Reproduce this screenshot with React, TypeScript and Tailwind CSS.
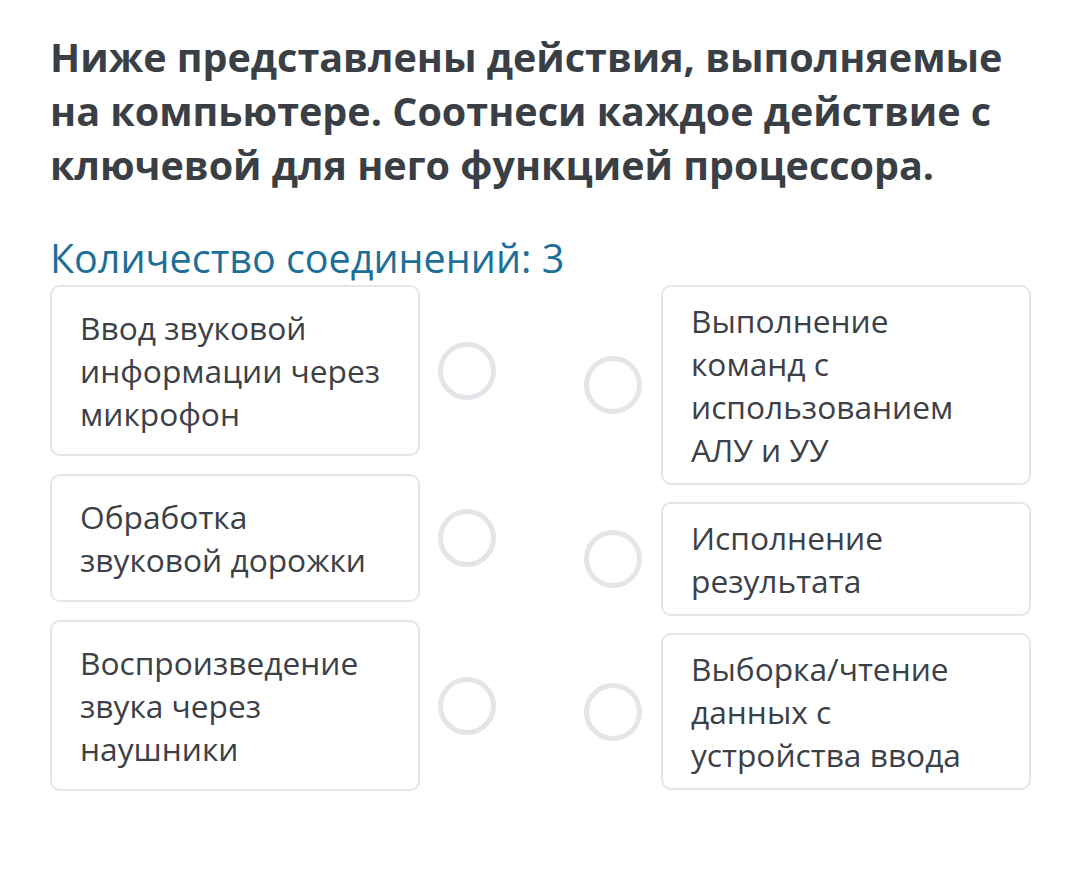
import React from 'react';

const leftItems = [
  'Ввод звуковой информации через микрофон',
  'Обработка звуковой дорожки',
  'Воспроизведение звука через наушники',
];

const rightItems = [
  'Выполнение команд с использованием АЛУ и УУ',
  'Исполнение результата',
  'Выборка/чтение данных с устройства ввода',
];

function Dot() {
  return <div className="w-[58px] h-[58px] shrink-0 rounded-full border-[5px] border-[#e3e6e9]" />;
}

export default function App() {
  return (
    <div className="min-h-[871px] bg-white pl-[50px] pt-[30px] font-['Open_Sans',sans-serif]">
      <h1 className="w-[990px] text-[39.5px] leading-[54px] font-bold text-[#3a3f46]">
        Ниже представлены действия, выполняемые на компьютере. Соотнеси каждое действие с ключевой для него функцией процессора.
      </h1>

      <p className="mt-[42px] text-[39.5px] leading-[48px] text-[#1d6f98]">Количество соединений: 3</p>

      <div className="mt-[3px] flex items-start gap-[88px]">
        {/* left side */}
        <div className="flex flex-col gap-[18px]">
          {leftItems.map((text) => (
            <div key={text} className="flex items-center gap-[18px]">
              <div className="w-[370px] rounded-[10px] border-2 border-[#e4e6e8] pl-[28px] pr-[28px] py-[19px] text-[31.7px] leading-[43px] text-[#3c4047]">
                {text}
              </div>
              <Dot />
            </div>
          ))}
        </div>

        {/* right side */}
        <div className="flex flex-col gap-[17px]">
          {rightItems.map((text) => (
            <div key={text} className="flex items-center gap-[19px]">
              <Dot />
              <div className="w-[370px] rounded-[10px] border-2 border-[#e4e6e8] pl-[28px] pr-[28px] py-[12px] text-[31.7px] leading-[43px] text-[#3c4047]">
                {text}
              </div>
            </div>
          ))}
        </div>
      </div>
    </div>
  );
}
